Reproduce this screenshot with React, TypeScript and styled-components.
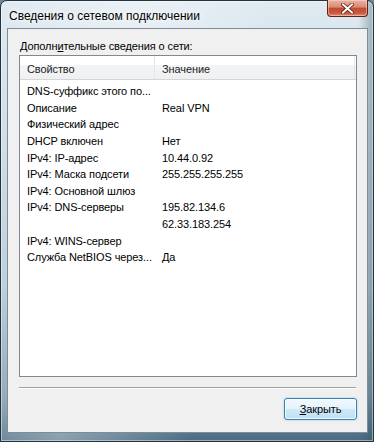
import React, { FC } from "react";
import styled, { createGlobalStyle } from "styled-components";

const GlobalStyle = createGlobalStyle`
  html, body {
    margin: 0;
    padding: 0;
    background: #6f8797;
  }
  body {
    font-family: "Liberation Sans", Arial, sans-serif;
  }
`;

const Frame = styled.div`
  position: relative;
  box-sizing: border-box;
  width: 374px;
  height: 442px;
  display: flex;
  flex-direction: column;
  padding: 0 5px 8px 6px;
  border: 1px solid #23323d;
  border-radius: 7px 7px 0 0;
  box-shadow: inset 0 0 0 1px rgba(255, 255, 255, 0.45);
  background:
    linear-gradient(100deg, rgba(255, 255, 255, 0) 0%, rgba(255, 255, 255, 0.35) 30%, rgba(255, 255, 255, 0) 60%),
    linear-gradient(270deg, rgba(40, 70, 80, 0.35) 0%, rgba(40, 70, 80, 0) 4%),
    linear-gradient(180deg, #dfeaf1 0%, #cddde8 30%, #b3c8d6 65%, #7d99ac 90%, #4b6b82 100%);
`;

const TitleBar = styled.div`
  height: 27px;
  display: flex;
  align-items: flex-start;
  justify-content: space-between;
`;

const Title = styled.span`
  margin: 7px 0 0 2px;
  font-size: 12px;
  line-height: 16px;
  color: #000;
  text-shadow: 0 0 8px #fff, 0 0 4px #fff;
`;

const CloseButton = styled.div`
  box-sizing: border-box;
  width: 41px;
  height: 17px;
  margin-top: -1px;
  display: flex;
  align-items: center;
  justify-content: center;
  border: 1px solid #5b2419;
  border-top: none;
  border-radius: 0 0 4px 4px;
  background: linear-gradient(180deg, #e9b3a4 0%, #d98a75 45%, #c24a31 50%, #c9573c 80%, #e08d6f 100%);
  box-shadow: inset 0 0 0 1px rgba(255, 220, 210, 0.5);
`;

const Client = styled.div`
  flex: 1;
  display: flex;
  flex-direction: column;
  background: #f0f0f0;
  border: 1px solid #7d8c97;
  padding: 9px 10px 0 11px;
  font-size: 11px;
  letter-spacing: -0.1px;
`;

const Caption = styled.div`
  line-height: 16px;
  color: #000;
  margin-left: 1px;
  height: 17px;
`;

const AccessKey = styled.span`
  text-decoration: underline;
`;

const ListView = styled.div`
  height: 320px;
  border: 1px solid #828790;
  background: #fff;
  display: flex;
  flex-direction: column;
`;

const Header = styled.div`
  height: 24px;
  display: grid;
  grid-template-columns: 135px 200px 1fr;
  background: linear-gradient(180deg, #ffffff 0%, #ffffff 40%, #f3f4f6 41%, #eef0f2 100%);
  border-bottom: 1px solid #d5d5d5;
  box-sizing: border-box;
`;

const HeaderCell = styled.div<{ $last?: boolean }>`
  display: flex;
  align-items: center;
  padding-left: 7px;
  padding-top: 2px;
  color: #1c1c1c;
  border-right: ${(p) => (p.$last ? "none" : "1px solid #e3e5e8")};
`;

const Rows = styled.div`
  padding-top: 3px;
  display: flex;
  flex-direction: column;
`;

const Row = styled.div`
  height: 16.6px;
  display: grid;
  grid-template-columns: 135px 1fr;
  align-items: center;
  color: #000;
  white-space: nowrap;
`;

const Cell = styled.div`
  padding-left: 7px;
`;

const Separator = styled.div`
  height: 0;
  margin: 10px 1px 0 0;
  border-top: 1px solid #a0a0a0;
  border-bottom: 1px solid #ffffff;
`;

const Footer = styled.div`
  display: flex;
  justify-content: flex-end;
  margin-top: 9px;
`;

const Button = styled.button`
  box-sizing: border-box;
  width: 73px;
  height: 22px;
  padding: 0;
  font-family: inherit;
  font-size: 11px;
  letter-spacing: -0.1px;
  color: #000;
  border: 1px solid #3c7fb1;
  border-radius: 3px;
  background: linear-gradient(180deg, #f1f9fe 0%, #e3f3fc 50%, #cfe9f7 51%, #bfe0f3 100%);
  box-shadow: inset 0 0 0 1px rgba(255, 255, 255, 0.75), 0 0 2px rgba(80, 170, 230, 0.6);
`;

const rows: [string, string][] = [
  ["DNS-суффикс этого по...", ""],
  ["Описание", "Real VPN"],
  ["Физический адрес", ""],
  ["DHCP включен", "Нет"],
  ["IPv4: IP-адрес", "10.44.0.92"],
  ["IPv4: Маска подсети", "255.255.255.255"],
  ["IPv4: Основной шлюз", ""],
  ["IPv4: DNS-серверы", "195.82.134.6"],
  ["", "62.33.183.254"],
  ["IPv4: WINS-сервер", ""],
  ["Служба NetBIOS через...", "Да"],
];

const CloseGlyph: FC = () => (
  <svg width="13" height="11" viewBox="0 0 13 11">
    <path
      d="M2 1.5 L11 9.5 M11 1.5 L2 9.5"
      stroke="#5a2016"
      strokeWidth="3.6"
      strokeLinecap="square"
    />
    <path
      d="M2 1.5 L11 9.5 M11 1.5 L2 9.5"
      stroke="#ffffff"
      strokeWidth="2"
      strokeLinecap="square"
    />
  </svg>
);

const App: FC = () => {
  return (
    <>
      <GlobalStyle />
      <Frame>
        <TitleBar>
          <Title>Сведения о сетевом подключении</Title>
          <CloseButton>
            <CloseGlyph />
          </CloseButton>
        </TitleBar>
        <Client>
          <Caption>
            Дополн<AccessKey>и</AccessKey>тельные сведения о сети:
          </Caption>
          <ListView>
            <Header>
              <HeaderCell>Свойство</HeaderCell>
              <HeaderCell>Значение</HeaderCell>
              <HeaderCell $last />
            </Header>
            <Rows>
              {rows.map(([name, value], i) => (
                <Row key={i}>
                  <Cell>{name}</Cell>
                  <Cell>{value}</Cell>
                </Row>
              ))}
            </Rows>
          </ListView>
          <Separator />
          <Footer>
            <Button>
              <AccessKey>З</AccessKey>акрыть
            </Button>
          </Footer>
        </Client>
      </Frame>
    </>
  );
};

export default App;
